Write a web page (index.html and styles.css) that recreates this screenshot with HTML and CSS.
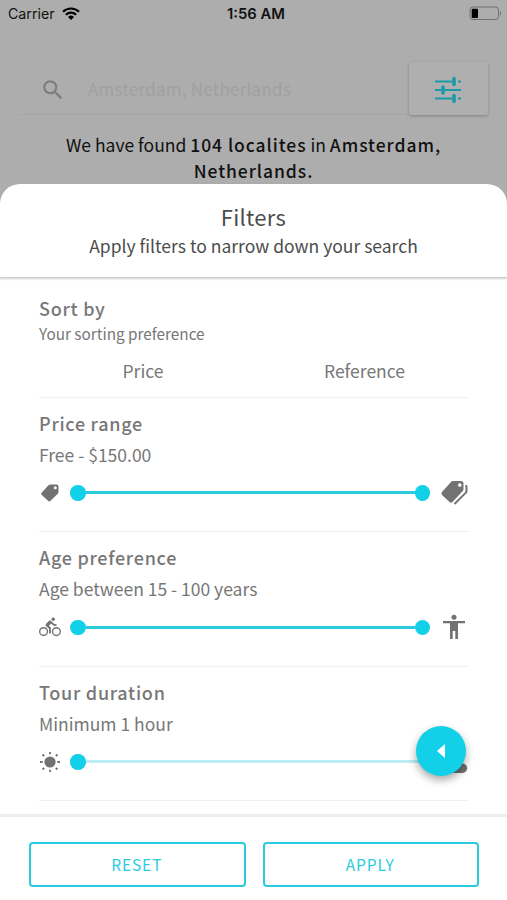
FILE: index.html
```html
<!DOCTYPE html>
<html lang="en">
  <head>
    <meta charset="UTF-8" />
    <meta name="viewport" content="width=device-width, initial-scale=1.0" />
    <title>Filters</title>
    <link rel="stylesheet" href="styles.css">
  </head>
  <body>
    <div class="backdrop">
      <div class="status-bar">
        <div class="carrier">
          <span>Carrier</span>
          <svg class="wifi" viewBox="0 0 18 13">
            <path d="M1 4.8a11.4 11.4 0 0 1 16 0M3.9 7.8a7.2 7.2 0 0 1 10.2 0" fill="none" stroke="#000" stroke-width="2.2" />
            <path d="M6 10a4.3 4.3 0 0 1 6 0L9 13z" />
          </svg>
        </div>
        <div class="time">1:56 AM</div>
        <svg class="battery" viewBox="0 0 33 15">
          <rect x="1" y="1" width="28.5" height="12.5" rx="3" fill="none" stroke="#6f6f6f" />
          <rect x="2.7" y="2.7" width="6.3" height="9.2" rx="1" />
          <path d="M31 5v4.6c1.4-.4 1.4-4.2 0-4.6z" fill="#6f6f6f" />
        </svg>
      </div>
      <div class="search-row">
        <div class="search-box">
          <svg class="search-icon" viewBox="0 0 24 24">
            <path d="M15.5 14h-.79l-.28-.27A6.47 6.47 0 0 0 16 9.5 6.5 6.5 0 1 0 9.5 16c1.61 0 3.09-.59 4.23-1.57l.27.28v.79l5 4.99L20.49 19l-4.99-5zm-6 0a4.5 4.5 0 1 1 0-9 4.5 4.5 0 0 1 0 9z" />
          </svg>
          <span>Amsterdam, Netherlands</span>
        </div>
        <div class="filter-button">
          <svg viewBox="0 0 28 28">
            <path d="M1 5.5h17M24 5.5h3M1 14h6M11 14h16M1 22.5h17M24 22.5h3" stroke-width="1.8" />
            <path d="M20 2.500v6M9 11v6M20 19.500v6" stroke-width="3.6" stroke-linecap="round" />
          </svg>
        </div>
      </div>
      <p class="result">We have found <b>104 localites</b> in <b>Amsterdam, Netherlands.</b></p>
    </div>

    <div class="sheet">
      <header class="sheet-header">
        <h1>Filters</h1>
        <p>Apply filters to narrow down your search</p>
      </header>

      <main class="filters">
        <section class="group sort">
          <h2>Sort by</h2>
          <p class="hint">Your sorting preference</p>
          <div class="sort-options">
            <span>Price</span>
            <span>Reference</span>
          </div>
        </section>

        <section class="group">
          <h2>Price range</h2>
          <p class="value">Free - $150.00</p>
          <div class="slider-row">
            <svg class="icon-small" viewBox="0 0 22 22">
              <path d="M11.5 2.500h6Q19.500 2.500 19.500 4.500v5.500q0 1-.7 1.700L11.500 18.800q-1.300 1.200-2.500 0L2.800 13q-1.300-1.300 0-2.600L9.500 3.300q.8-.8 2-.8zM16.300 4.300a1.500 1.500 0 1 0 0 3 1.500 1.500 0 0 0 0-3z" fill-rule="evenodd" />
            </svg>
            <div class="slider">
              <i class="thumb"></i><i class="track"></i><i class="thumb"></i>
            </div>
            <svg class="icon-large" viewBox="0 0 28 28">
              <path d="M13 2h8Q23.500 2 23.500 4.500v5.800q0 1-.7 1.700L12.500 23q-1.500 1.400-3 0L2 16q-1.400-1.500 0-3L11 3q.8-1 2-1zM19.800 4.300a1.800 1.800 0 1 0 0 3.600 1.800 1.800 0 0 0 0-3.600z" fill-rule="evenodd" />
              <path d="M25.500 6.300q1 .6 1 1.700v4.200q0 .8-.6 1.400L14.500 25" fill="none" stroke="#727272" stroke-width="2" />
            </svg>
          </div>
        </section>

        <section class="group">
          <h2>Age preference</h2>
          <p class="value">Age between 15 - 100 years</p>
          <div class="slider-row">
            <svg class="icon-small" viewBox="0 0 24 24">
              <path d="M15.5 5.500a2 2 0 1 0 0-4 2 2 0 0 0 0 4zM5 12a5 5 0 1 0 0 10 5 5 0 0 0 0-10zm0 8.500a3.500 3.500 0 1 1 0-7 3.500 3.500 0 0 1 0 7zm5.800-10 2.400-2.400.8.800c1.300 1.300 3 2.100 5.100 2.100V9c-1.500 0-2.700-.6-3.600-1.500l-1.900-1.900c-.5-.4-1-.6-1.600-.6s-1.100.2-1.400.6L7.800 8.400c-.4.4-.6.9-.6 1.400 0 .6.2 1.100.6 1.400L11 14v5h2v-6.200l-2.200-2.300zM19 12a5 5 0 1 0 0 10 5 5 0 0 0 0-10zm0 8.500a3.500 3.500 0 1 1 0-7 3.500 3.500 0 0 1 0 7z" />
            </svg>
            <div class="slider">
              <i class="thumb"></i><i class="track"></i><i class="thumb"></i>
            </div>
            <svg class="icon-large" viewBox="0 0 28 28">
              <circle cx="14" cy="4.2" r="2.5" />
              <path d="M3 8h22v2.300h-7V26h-2.700v-8h-2.600v8H10V10.300H3z" />
            </svg>
          </div>
        </section>

        <section class="group">
          <h2>Tour duration</h2>
          <p class="value">Minimum 1 hour</p>
          <div class="slider-row">
            <svg class="icon-small" viewBox="0 0 22 22">
              <circle cx="11" cy="11" r="5.6" />
              <path d="M11 1v2.200M11 18.800V21M1 11h2.700M18.300 11H21M3.500 3.500l1.700 1.700M16.800 16.800l1.700 1.700M18.500 3.500l-1.700 1.700M5.200 16.800l-1.700 1.700" stroke="#727272" stroke-width="1.8" />
            </svg>
            <div class="slider">
              <i class="thumb"></i><i class="track light"></i>
            </div>
            <svg class="icon-large" viewBox="0 0 28 28">
              <path d="M8 25a6 6 0 0 1-1-11.500A8 8 0 0 1 20 12c1.500 1.500 2 2 2.500 3.500a4.700 4.700 0 0 1 0 9.500z" />
            </svg>
          </div>
        </section>
      </main>

      <footer class="actions">
        <button>RESET</button>
        <button>APPLY</button>
      </footer>
    </div>

    <div class="fab">
      <svg viewBox="0 0 8 14"><path d="M8 0v14L0 7z" /></svg>
    </div>
  </body>
</html>
```
FILE: styles.css
```css
* {
  box-sizing: border-box;
}

body {
  margin: 0;
  height: 900px;
  overflow: hidden;
  background: #adadad;
  color: #777;
  font-family: "Noto Sans CJK SC", "Open Sans", sans-serif;
}

h1,
h2,
p {
  margin: 0;
  font-weight: 400;
}

svg {
  display: block;
  flex: none;
}

/* Dimmed page behind the sheet */
.backdrop {
  height: 184px;
  color: #111;
}

.status-bar {
  display: grid;
  grid-template-columns: 1fr auto 1fr;
  align-items: center;
  height: 27px;
  padding: 0 5px 0 8px;
  font-family: Inter, sans-serif;
  font-size: 14.2px;
}

.carrier {
  display: flex;
  align-items: center;
  gap: 7px;
}

.wifi {
  width: 18px;
  height: 13px;
}

.time {
  padding-left: 2px;
  font-size: 14.8px;
  font-weight: 600;
}

.battery {
  width: 33px;
  height: 15px;
  justify-self: end;
}

.search-row {
  display: flex;
  height: 53px;
  margin: 35px 19px 0 20px;
}

.search-box {
  display: flex;
  flex: 1;
  align-items: center;
  gap: 22px;
  padding-left: 20px;
  border-bottom: 1px solid #a5a5a5;
  color: #a0a0a0;
  font-size: 17px;
  letter-spacing: 0.25px;
}

.search-icon {
  width: 26px;
  height: 26px;
  margin-top: 3px;
  fill: #7d7d7d;
}

.filter-button {
  display: flex;
  align-items: center;
  justify-content: center;
  width: 79px;
  border-radius: 2px;
  background: #afafaf;
  box-shadow: 0 1px 3px rgba(0, 0, 0, 0.25);
}

.filter-button svg {
  width: 28px;
  height: 28px;
  margin: 3px 1px 0 0;
  fill: none;
  stroke: #1a99a8;
}

.result {
  width: 420px;
  margin: 17px auto 0;
  font-size: 17.5px;
  line-height: 26px;
  text-align: center;
}

.result b {
  font-weight: 500;
  letter-spacing: 0.95px;
}

/* Bottom sheet */
.sheet {
  display: flex;
  flex-direction: column;
  height: 716px;
  border-radius: 20px 20px 0 0;
  background: #fff;
}

.sheet-header {
  height: 94px;
  padding-top: 16px;
  border-bottom: 1px solid #d2d2d2;
  box-shadow: 0 1px 2px rgba(0, 0, 0, 0.2);
  color: #4c4c4c;
  text-align: center;
}

.sheet-header h1 {
  font-size: 22px;
  line-height: 32px;
  letter-spacing: 0.3px;
}

.sheet-header p {
  margin-top: 1px;
  font-size: 17.5px;
  line-height: 26px;
}

.filters {
  height: 537px;
  padding: 0 38px 0 39px;
}

.group {
  height: 134.5px;
  padding-top: 12px;
  border-bottom: 1px solid #f1f1f1;
}

.group.sort {
  height: 120px;
  padding-top: 17px;
}

.group h2 {
  font-size: 18px;
  font-weight: 500;
  line-height: 27px;
  letter-spacing: 0.72px;
}

.hint {
  margin-top: 1px;
  font-size: 15.3px;
  line-height: 21px;
}

.sort-options {
  display: grid;
  grid-template-columns: 208px 1fr;
  column-gap: 14px;
  margin-top: 13px;
  font-size: 17.5px;
  line-height: 28px;
  text-align: center;
}

.sort-options span:last-child {
  padding-right: 1px;
}

.value {
  margin-top: 4px;
  font-size: 17.5px;
  line-height: 28px;
}

.slider-row {
  display: flex;
  align-items: center;
  height: 28px;
  margin-top: 10px;
}

.icon-small {
  width: 22px;
  height: 22px;
  fill: #727272;
}

.icon-large {
  width: 28px;
  height: 28px;
  margin-right: 1px;
  margin-left: 10px;
  fill: #727272;
}

.slider {
  display: flex;
  flex: 1;
  align-items: center;
  margin-left: 9px;
}

.thumb {
  width: 15.5px;
  height: 15.5px;
  border-radius: 50%;
  background: #11d0e7;
}

.track {
  flex: 1;
  height: 3px;
  background: #2bcbde;
}

.track.light {
  background: #bdecf2;
}

.actions {
  display: flex;
  flex: 1;
  gap: 17px;
  padding: 25px 28px 13px 29px;
  border-top: 3px solid #eee;
}

.actions button {
  flex: 1;
  height: 45px;
  padding: 0 1px 1px 0;
  border: 2.5px solid #2bcbde;
  border-radius: 4px;
  background: #fff;
  color: #2bcbde;
  font-family: inherit;
  font-size: 15.5px;
  letter-spacing: 0.9px;
}

.fab {
  position: absolute;
  top: 726px;
  left: 416px;
  display: flex;
  align-items: center;
  justify-content: center;
  width: 50px;
  height: 50px;
  border-radius: 50%;
  background: #11d0e7;
  box-shadow: 0 4px 9px rgba(0, 0, 0, 0.35);
}

.fab svg {
  width: 8px;
  height: 14px;
  fill: #fff;
}
```
